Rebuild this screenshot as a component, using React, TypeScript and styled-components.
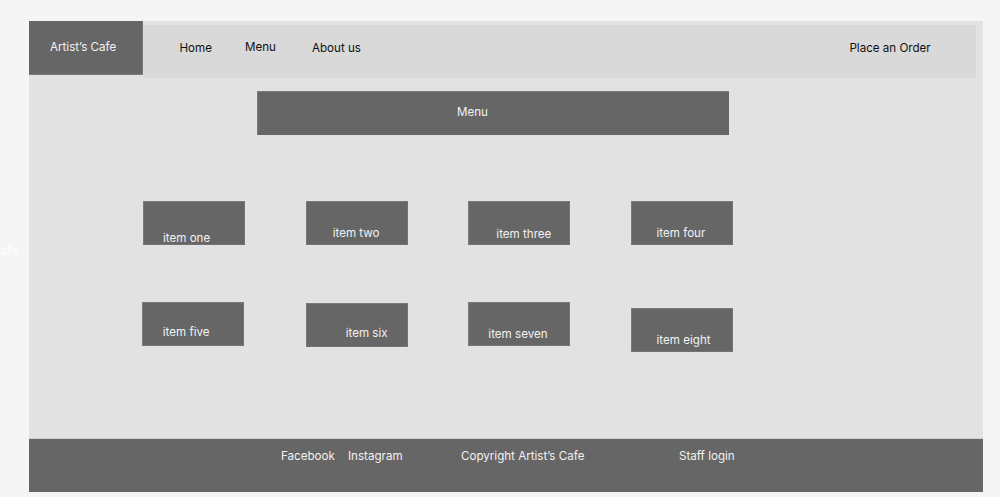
import styled, { createGlobalStyle } from "styled-components";

const GlobalStyle = createGlobalStyle`
  html, body {
    margin: 0;
    padding: 0;
    background: #f5f5f5;
  }
  body {
    font-family: Inter, "Noto Sans", "Liberation Sans", sans-serif;
    font-size: 11.6px;
    line-height: 17px;
    overflow: hidden;
  }
`;

const navLinks = [
  { label: "Home", width: 65.5, dy: 0 },
  { label: "Menu", width: 67, dy: -1 },
  { label: "About us", width: 100, dy: 0 },
];

const items = [
  { label: "item one", dx: 0, dy: 0, tx: 20, ty: 29 },
  { label: "item two", dx: 0, dy: 0, tx: 27, ty: 23.5 },
  { label: "item three", dx: 0, dy: 0, tx: 28, ty: 25 },
  { label: "item four", dx: 0, dy: 0, tx: 25.5, ty: 23.5 },
  { label: "item five", dx: -0.7, dy: 0, tx: 20.5, ty: 21.5 },
  { label: "item six", dx: 0, dy: 1.3, tx: 40, ty: 22 },
  { label: "item seven", dx: 0, dy: 0, tx: 20, ty: 23.5 },
  { label: "item eight", dx: 0, dy: 5.7, tx: 25.5, ty: 24.5 },
];

const footerLinks = [
  { label: "Facebook", width: 67 },
  { label: "Instagram", width: 113 },
  { label: "Copyright Artist’s Cafe", width: 218 },
  { label: "Staff login", width: 100 },
];

const App = () => {
  return (
    <>
      <GlobalStyle />
      <Page>
        <GhostText>Artist’s Cafe</GhostText>
        <Frame>
          <Header>
            <Logo>Artist’s Cafe</Logo>
            <Nav>
              {navLinks.map((l) => (
                <NavLink key={l.label} $width={l.width} $dy={l.dy}>
                  {l.label}
                </NavLink>
              ))}
              <OrderLink>Place an Order</OrderLink>
            </Nav>
          </Header>

          <MenuBar>Menu</MenuBar>

          <ItemGrid>
            {items.map((it) => (
              <Item key={it.label} $dx={it.dx} $dy={it.dy}>
                <ItemLabel $tx={it.tx} $ty={it.ty}>
                  {it.label}
                </ItemLabel>
              </Item>
            ))}
          </ItemGrid>

          <Footer>
            {footerLinks.map((f) => (
              <FooterLink key={f.label} $width={f.width}>
                {f.label}
              </FooterLink>
            ))}
          </Footer>
        </Frame>
      </Page>
    </>
  );
};

export default App;

const Page = styled.div`
  position: relative;
  width: 1000px;
  height: 497px;
  padding: 21px 0 0 28.7px;
  box-sizing: border-box;
`;

/* leftover label from off-canvas, only its tail shows */
const GhostText = styled.div`
  position: absolute;
  left: -48px;
  top: 243px;
  color: #ffffff;
  white-space: nowrap;
`;

const Frame = styled.div`
  width: 954.3px;
  height: 471px;
  background: #e2e2e2;
  display: flex;
  flex-direction: column;
`;

const Header = styled.div`
  display: flex;
  align-items: flex-start;
  height: 57px;
`;

const Logo = styled.div`
  width: 114.3px;
  height: 53.7px;
  background: #666666;
  color: #f2f2f2;
  display: flex;
  align-items: center;
  padding-left: 21.3px;
  box-sizing: border-box;
  border-right: 1px solid #7a7a7a;
  border-bottom: 1px solid #7a7a7a;
`;

const Nav = styled.div`
  flex: 1;
  height: 53px;
  margin: 4px 7.3px 0 0;
  background: #d9d9d9;
  display: flex;
  align-items: flex-start;
  padding: 14.5px 45px 0 36.5px;
  box-sizing: border-box;
  color: #111111;
`;

const NavLink = styled.div<{ $width: number; $dy: number }>`
  width: ${(p) => p.$width}px;
  margin-top: ${(p) => p.$dy}px;
  white-space: nowrap;
`;

const OrderLink = styled.div`
  margin-left: auto;
  white-space: nowrap;
`;

const MenuBar = styled.div`
  width: 472px;
  height: 44.5px;
  margin: 12.5px 0 0 228.3px;
  background: #666666;
  color: #f2f2f2;
  display: flex;
  align-items: center;
  padding: 0 0 2px 199px;
  box-sizing: border-box;
  border-top: 1px solid #7a7a7a;
  border-left: 1px solid #7a7a7a;
`;

const ItemGrid = styled.div`
  display: grid;
  grid-template-columns: repeat(4, 102px);
  column-gap: 60.7px;
  row-gap: 57px;
  align-items: start;
  margin: 66px 0 0 114.3px;
`;

const Item = styled.div<{ $dx: number; $dy: number }>`
  position: relative;
  left: ${(p) => p.$dx}px;
  margin-top: ${(p) => p.$dy}px;
  height: 44px;
  background: #666666;
  box-sizing: border-box;
  border-top: 1px solid #7a7a7a;
  border-left: 1px solid #7a7a7a;
  border-right: 1px solid #737373;
  border-bottom: 1px solid #737373;
`;

const ItemLabel = styled.div<{ $tx: number; $ty: number }>`
  padding: ${(p) => p.$ty - 1}px 0 0 ${(p) => p.$tx - 1}px;
  color: #f2f2f2;
  white-space: nowrap;
`;

const Footer = styled.div`
  margin-top: auto;
  height: 53.7px;
  background: #666666;
  border-top: 1px solid #cfcfcf;
  display: flex;
  align-items: flex-start;
  padding: 8.5px 0 0 252.3px;
  box-sizing: border-box;
  color: #f2f2f2;
`;

const FooterLink = styled.div<{ $width: number }>`
  width: ${(p) => p.$width}px;
  white-space: nowrap;
`;
